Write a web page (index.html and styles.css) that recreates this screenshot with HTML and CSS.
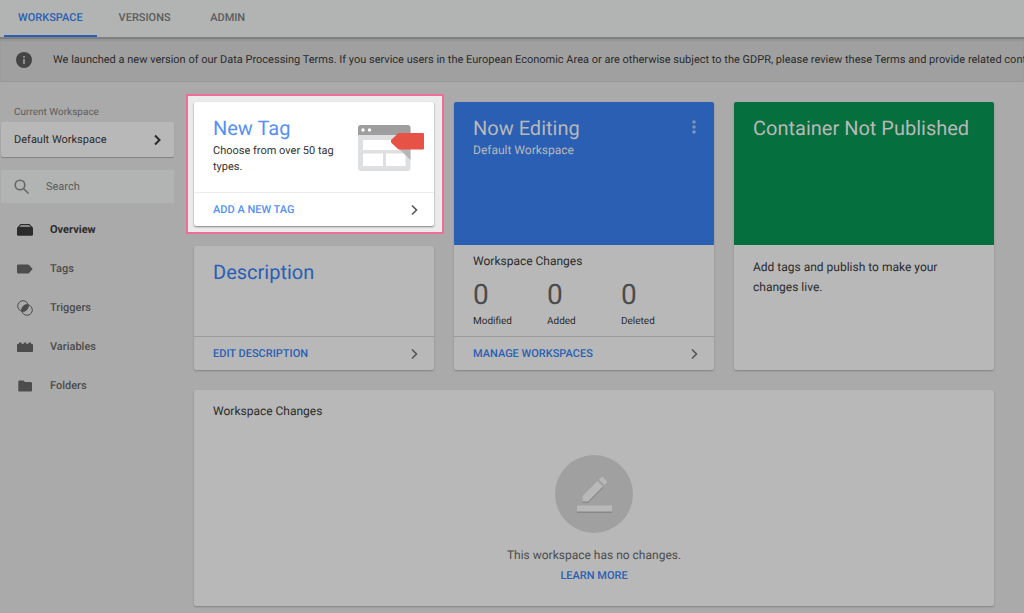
FILE: index.html
```html
<!DOCTYPE html>
<html lang="en">
<head>
<meta charset="utf-8">
<title>Workspace overview</title>
<link rel="stylesheet" href="styles.css">
</head>
<body>
<nav class="tabs">
  <a class="tab tab-active" href="#workspace">WORKSPACE</a>
  <a class="tab" href="#versions">VERSIONS</a>
  <a class="tab" href="#admin">ADMIN</a>
</nav>
<div class="notice">
  <svg class="notice-icon" viewBox="0 0 16 16" aria-hidden="true"><circle cx="8" cy="8" r="8"/><path fill="#a0a0a0" d="M7.2 7h1.6v5H7.2zM7.2 4h1.6v1.7H7.2z"/></svg>
  <p class="notice-text">We launched a new version of our Data Processing Terms. If you service users in the European Economic Area or are otherwise subject to the GDPR, please review these Terms and provide related contact info</p>
</div>
<div class="layout">
  <aside class="sidebar">
    <div class="sidebar-label" id="ws-label">Current Workspace</div>
    <button class="workspace" type="button" aria-describedby="ws-label">
      <span>Default Workspace</span>
      <svg class="chevron" viewBox="0 0 8 12" aria-hidden="true"><path d="M2 1.500 6.500 6 2 10.500"/></svg>
    </button>
    <label class="search">
      <svg class="search-icon" viewBox="0 0 16 16" aria-hidden="true"><circle cx="6" cy="6" r="4.800"/><path d="m9.500 9.500 5 5"/></svg>
      <input class="search-input" type="search" placeholder="Search" aria-label="Search">
    </label>
    <nav class="menu">
      <a class="menu-item menu-active" href="#overview">
        <svg class="menu-icon" viewBox="0 0 16 16" aria-hidden="true"><path d="M3.500 2h9l2.800 3H14l-2-1.800H4L2 5H.7z"/><rect y="4.800" width="16" height="9" rx="1.500"/></svg>Overview</a>
      <a class="menu-item" href="#tags">
        <svg class="menu-icon" viewBox="0 0 16 16" aria-hidden="true"><path d="M1.200 3.500h9.600c.6 0 1 .2 1.300.6L15.600 8l-3.500 4c-.3.400-.7.500-1.300.5H1.200c-.7 0-1.200-.5-1.200-1.200V4.700c0-.7.500-1.200 1.200-1.200z"/></svg>Tags</a>
      <a class="menu-item" href="#triggers">
        <svg class="menu-icon" viewBox="0 0 16 16" aria-hidden="true"><g fill="none" stroke="currentColor"><circle cx="6" cy="6" r="5.300"/><circle cx="10" cy="10" r="5.300"/></g><path d="M11.300 4.700A5.300 5.300 0 0 1 11.300 6 5.300 5.300 0 0 1 4.700 11.300 5.300 5.300 0 0 1 4.700 10 5.300 5.300 0 0 1 11.300 4.700z"/></svg>Triggers</a>
      <a class="menu-item" href="#variables">
        <svg class="menu-icon" viewBox="0 0 16 16" aria-hidden="true"><path d="M0 6c0-.6.400-1 1-1h.8V4.300c0-.5.300-.8.800-.8H4c.5 0 .8.300.8.800V5h1.800v-.7c0-.5.300-.8.800-.8h1.200c.5 0 .8.300.8.800V5h1.800v-.7c0-.5.300-.8.800-.8h1.400c.5 0 .8.300.8.800V5h.8c.6 0 1 .4 1 1v6c0 .6-.4 1-1 1H1c-.6 0-1-.4-1-1z"/></svg>Variables</a>
      <a class="menu-item" href="#folders">
        <svg class="menu-icon" viewBox="0 0 16 16" aria-hidden="true"><path d="M2.500 2.500h4L8 4h5.700c.7 0 1.300.6 1.300 1.300v6.900c0 .7-.6 1.300-1.300 1.300H2.500c-.7 0-1.200-.6-1.200-1.300V3.800c0-.7.500-1.300 1.200-1.300z"/></svg>Folders</a>
    </nav>
  </aside>
  <main class="board">
    <section class="card card-spot">
      <div class="card-body split">
        <div class="split-text">
          <h2 class="title">New Tag</h2>
          <p class="text">Choose from over 50 tag types.</p>
        </div>
        <svg class="tag-art" viewBox="0 0 66 46" aria-hidden="true">
          <rect width="52.500" height="46" rx="3" fill="#dedfe1"/>
          <path fill="#9e9e9e" d="M3 0h46.500a3 3 0 0 1 3 3v7H0V3a3 3 0 0 1 3-3z"/>
          <circle cx="5" cy="5" r="1.700" fill="#fff"/><circle cx="11.500" cy="5" r="1.700" fill="#fff"/>
          <path fill="#fff" d="M5 15h42.500v10H5zM5 28.500h20V41H5zM28 28.500h19.500V41H28z"/>
          <path fill="#b5b6b8" d="m38.500 21.500 14 13.500V20z"/>
          <path fill="#e65246" d="M40.500 8H65a1 1 0 0 1 1 1v14.500a1 1 0 0 1-1 1H40.500l-7-6.500c-.8-1-.8-2.500 0-3.500z"/>
        </svg>
      </div>
      <a class="action" href="#new-tag">ADD A NEW TAG<svg class="chevron" viewBox="0 0 8 12" aria-hidden="true"><path d="M2 1.500 6.500 6 2 10.500"/></svg></a>
    </section>
    <section class="card card-tall">
      <header class="banner banner-blue">
        <div>
          <h2 class="title">Now Editing</h2>
          <p class="subtitle">Default Workspace</p>
        </div>
        <button class="more" type="button" aria-label="More actions"><svg class="more-icon" viewBox="0 0 4 14" aria-hidden="true"><circle cx="2" cy="2" r="1.800"/><circle cx="2" cy="7" r="1.800"/><circle cx="2" cy="12" r="1.800"/></svg></button>
      </header>
      <div class="card-body stats-body">
        <h3 class="heading">Workspace Changes</h3>
        <dl class="stats">
          <div class="stat"><dt class="stat-name">Modified</dt><dd class="stat-value">0</dd></div>
          <div class="stat"><dt class="stat-name">Added</dt><dd class="stat-value">0</dd></div>
          <div class="stat"><dt class="stat-name">Deleted</dt><dd class="stat-value">0</dd></div>
        </dl>
      </div>
      <a class="action" href="#manage">MANAGE WORKSPACES<svg class="chevron" viewBox="0 0 8 12" aria-hidden="true"><path d="M2 1.500 6.500 6 2 10.500"/></svg></a>
    </section>
    <section class="card card-tall">
      <header class="banner banner-green"><h2 class="title">Container Not Published</h2></header>
      <p class="publish-text">Add tags and publish to make your changes live.</p>
    </section>
    <section class="card">
      <div class="card-body"><h2 class="title">Description</h2></div>
      <a class="action" href="#description">EDIT DESCRIPTION<svg class="chevron" viewBox="0 0 8 12" aria-hidden="true"><path d="M2 1.500 6.500 6 2 10.500"/></svg></a>
    </section>
    <section class="card card-wide">
      <h3 class="heading">Workspace Changes</h3>
      <div class="empty">
        <svg class="empty-art" viewBox="0 0 78 78" aria-hidden="true">
          <circle cx="39" cy="39" r="39" fill="#a0a0a0"/>
          <g fill="#888"><path d="m27.500 42.500 15.500-15.500 5.500 5.500L33 48h-5.500z"/><path d="M22 52h35v6H22z"/></g>
          <g fill="#b8b8b8"><path d="M27.500 41 42.500 26l5.500 5.500-15 15h-5.500z"/><path d="m44 24.500 2-2c.6-.6 1.500-.6 2.100 0l3.400 3.400c.6.600.6 1.500 0 2.100l-2 2z"/><path d="M22 50.500h35v6H22z"/></g>
        </svg>
        <p class="empty-text">This workspace has no changes.</p>
        <a class="learn" href="#learn">LEARN MORE</a>
      </div>
    </section>
  </main>
</div>
</body>
</html>
```
FILE: styles.css
```css
* {
  box-sizing: border-box;
}

body,
h2,
h3,
p,
dl,
dd {
  margin: 0;
}

body {
  background: #aaa;
  color: #2b2b2b;
  font: 11px/16px Roboto, "Liberation Sans", sans-serif;
  text-rendering: geometricPrecision;
}

a {
  color: #2a5fb4;
  text-decoration: none;
}

button,
input {
  border: 0;
  padding: 0;
  background: none;
  color: inherit;
  font: inherit;
  text-rendering: inherit;
}

svg {
  display: block;
  flex: none;
}

.tabs {
  display: flex;
  gap: 8px;
  height: 39px;
  padding-left: 4px;
  background: #b1b4b3;
  border-bottom: 2px solid #808080;
}

.tab {
  min-width: 70px;
  padding: 10px 14px 0;
  border-bottom: 2px solid transparent;
  color: #5b5d5c;
  font-weight: 500;
  text-align: center;
}

.tab-active {
  border-color: #2a5fb4;
  color: #2a5fb4;
}

.notice {
  display: flex;
  align-items: center;
  gap: 21px;
  height: 43px;
  padding-left: 16px;
  overflow: hidden;
  background: #a0a0a0;
  border-bottom: 1px solid #999;
  box-shadow: inset 0 2px 2px #949494;
}

.notice-icon {
  width: 16px;
  height: 16px;
  fill: #444;
}

.notice-text {
  white-space: nowrap;
}

.layout {
  display: flex;
  gap: 20px;
  padding: 20px 30px 8px 1px;
}

.sidebar {
  flex: none;
  width: 173px;
}

.sidebar-label {
  padding: 3px 13px 0;
  color: #5c5c5c;
  font-size: 10px;
}

.workspace {
  display: flex;
  align-items: center;
  justify-content: space-between;
  width: 100%;
  height: 35px;
  margin-top: 1px;
  padding: 0 13px;
  background: #b8b8b8;
  border-radius: 2px;
  box-shadow: 0 1px 1px #808080;
}

.chevron {
  width: 8px;
  height: 12px;
  fill: none;
  stroke: #555;
  stroke-width: 1.6;
}

.workspace .chevron {
  stroke: #2b2b2b;
  stroke-width: 2;
}

.search {
  display: flex;
  align-items: center;
  gap: 16px;
  height: 33px;
  margin: 13px 0 7px;
  padding: 0 13px;
  background: #b1b4b3;
}

.search-icon {
  width: 16px;
  height: 16px;
  fill: none;
  stroke: #666;
  stroke-width: 1.6;
}

.search-input {
  flex: 1;
  min-width: 0;
  outline: 0;
}

.search-input::placeholder {
  color: #5c5c5c;
  opacity: 1;
}

.menu-item {
  display: flex;
  align-items: center;
  gap: 17px;
  height: 39px;
  padding-left: 16px;
  color: #4c4c4c;
  font-weight: 500;
}

.menu-active {
  color: #2b2b2b;
  font-weight: 700;
}

.menu-icon {
  width: 16px;
  height: 16px;
  fill: currentColor;
}

.board {
  display: grid;
  flex: 1;
  grid-template-columns: 12fr 13fr 13fr;
  grid-template-rows: 124px 124px 216px;
  gap: 20px;
  min-width: 0;
}

.card {
  display: flex;
  flex-direction: column;
  background: #b8b8b8;
  border-radius: 2px;
  box-shadow: 0 1px 2px #808080;
}

.card-tall {
  grid-row: span 2;
}

.card-wide {
  grid-column: 1 / -1;
  padding: 13px 19px;
}

.card-spot {
  position: relative;
  background: #fff;
  color: #333;
}

.card-spot::before {
  content: "";
  position: absolute;
  inset: -8px -10px -8px -8px;
  z-index: -1;
  background: #ebebeb;
  border: 2px solid #f06c9b;
}

.card-body {
  flex: 1;
  padding: 14px 19px 0;
}

.title {
  color: #2a5fb4;
  font-size: 20px;
  font-weight: 400;
  line-height: 24px;
}

.card-spot .title,
.card-spot .action {
  color: #5690f5;
}

.card-spot .action {
  border-color: #ececec;
}

.split {
  display: flex;
  justify-content: space-between;
  padding-right: 10px;
}

.split-text {
  width: 132px;
}

.text {
  margin-top: 3px;
}

.tag-art {
  width: 66px;
  height: 46px;
  margin-top: 9px;
}

.action {
  display: flex;
  align-items: center;
  justify-content: space-between;
  height: 34px;
  padding: 0 16px 0 19px;
  border-top: 1px solid #9c9c9c;
  font-size: 11px;
  font-weight: 500;
}

.banner {
  display: flex;
  justify-content: space-between;
  height: 143px;
  padding: 14px 18px 0 19px;
  border-radius: 2px 2px 0 0;
}

.banner .title,
.subtitle {
  color: #b8b8b8;
}

.subtitle {
  margin-top: 2px;
  font-size: 12px;
}

.banner-blue {
  background: #2a5fb4;
}

.banner-green {
  background: #056f3d;
}

.more {
  height: 22px;
}

.more-icon {
  width: 4px;
  height: 14px;
  fill: #8095b5;
}

.heading {
  font-size: 12px;
  font-weight: 400;
  line-height: 16px;
}

.stats-body {
  padding-top: 8px;
}

.stats {
  display: flex;
  margin-top: 10px;
}

.stat {
  display: flex;
  flex-direction: column-reverse;
  width: 74px;
}

.stat-name {
  margin-top: 3px;
  font-size: 10px;
}

.stat-value {
  color: #4c4c4c;
  font-size: 28px;
  font-weight: 400;
  line-height: 32px;
}

.publish-text {
  padding: 12px 19px;
  font-size: 12px;
  line-height: 20px;
}

.empty {
  display: flex;
  flex-direction: column;
  align-items: center;
  margin-top: 36px;
}

.empty-art {
  width: 78px;
  height: 78px;
}

.empty-text {
  margin-top: 14px;
  color: #4c4c4c;
  font-size: 12px;
}

.learn {
  margin-top: 5px;
  font-size: 11px;
  font-weight: 500;
}
```
